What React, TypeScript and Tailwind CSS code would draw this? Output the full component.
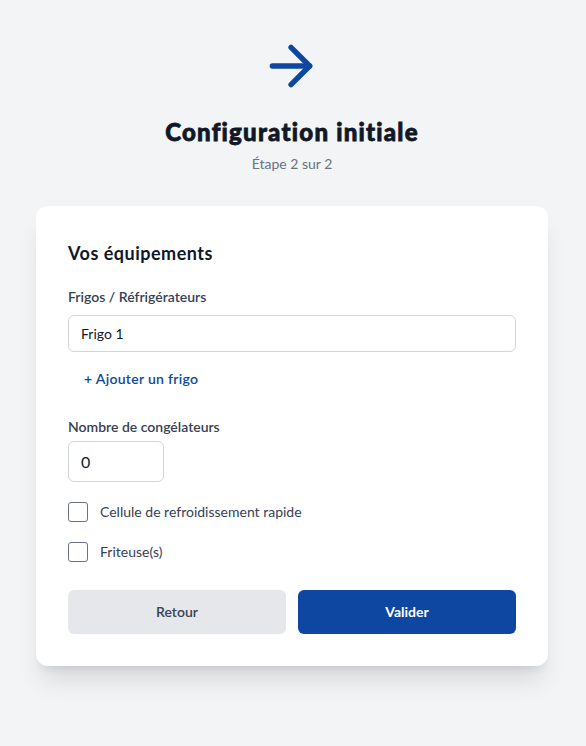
import { ArrowRight } from "lucide-react";

const Checkbox = ({ label }: { label: string }) => (
  <label className="flex items-center gap-3 h-5">
    <span className="w-5 h-5 rounded-[3px] border border-gray-500 bg-white" />
    <span className="text-sm text-gray-700">{label}</span>
  </label>
);

const App = () => {
  return (
    <div
      className="min-h-[746px] bg-gray-100 flex flex-col items-center pt-[34px] pr-[2px]"
      style={{ fontFamily: "Lato, 'Liberation Sans', sans-serif" }}
    >
      <ArrowRight size={64} strokeWidth={2} className="text-[#0d47a1] -ml-0.5" />

      <h1 className="mt-[18px] text-2xl leading-8 font-black tracking-[1.25px] [-webkit-text-stroke:0.8px_#111827] text-gray-900">
        Configuration initiale
      </h1>
      <p className="mt-1.5 text-sm leading-5 text-gray-500">Étape 2 sur 2</p>

      <div className="mt-8 w-[512px] bg-white rounded-xl shadow-xl px-8 pt-[33px] pb-8">
        <h2 className="text-lg leading-7 font-bold tracking-[0.5px] text-gray-900">
          Vos équipements
        </h2>

        <div className="mt-5">
          <label className="block text-sm leading-5 font-semibold text-gray-700 mb-2">
            Frigos / Réfrigérateurs
          </label>
          <input
            defaultValue="Frigo 1"
            className="w-full h-[37px] px-3 rounded-md border border-gray-300 text-sm text-gray-900 outline-none"
          />
          <button className="mt-[9px] px-4 py-2 text-sm leading-5 font-semibold tracking-[0.3px] text-[#0d47a1]">
            + Ajouter un frigo
          </button>
        </div>

        <div className="mt-5">
          <label className="block text-sm leading-5 font-semibold text-gray-700 mb-1">
            Nombre de congélateurs
          </label>
          <input
            defaultValue="0"
            className="w-24 h-[41px] px-3 rounded-md border border-gray-300 text-base text-gray-900 outline-none"
          />
        </div>

        <div className="mt-5 flex flex-col gap-5">
          <Checkbox label="Cellule de refroidissement rapide" />
          <Checkbox label="Friteuse(s)" />
        </div>

        <div className="mt-7 flex gap-3">
          <button className="flex-1 h-11 rounded-md bg-gray-200 text-sm font-semibold text-gray-700">
            Retour
          </button>
          <button className="flex-1 h-11 rounded-md bg-[#0d47a1] text-sm font-bold text-white">
            Valider
          </button>
        </div>
      </div>
    </div>
  );
};

export default App;
